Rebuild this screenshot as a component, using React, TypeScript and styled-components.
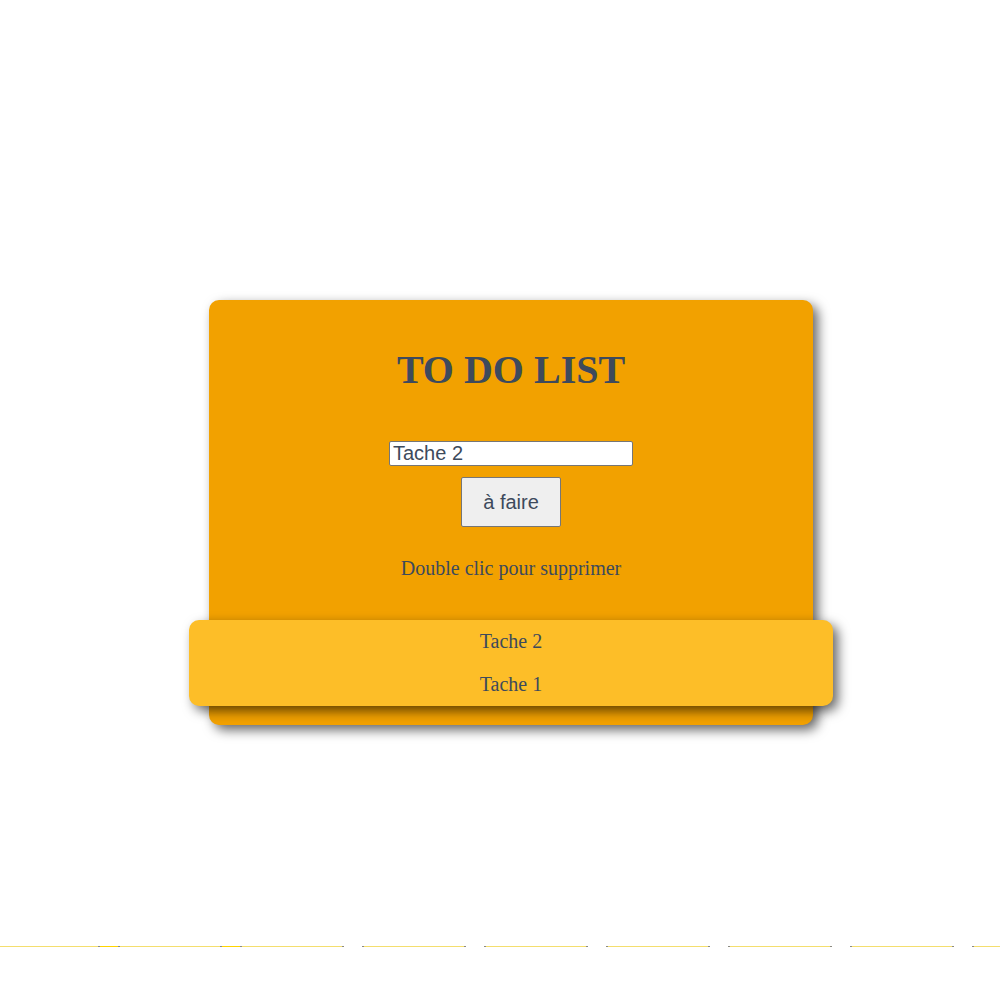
import React, { useState } from "react";
import styled, { createGlobalStyle } from "styled-components";

const GlobalStyle = createGlobalStyle`
  html, body {
    margin: 0;
    padding: 0;
    background: #ffffff;
  }
  body {
    font-family: "Liberation Serif", "Times New Roman", serif;
    color: #3d4a5c;
  }
`;

const Page = styled.main`
  display: flex;
  flex-direction: column;
  align-items: center;
  padding: 300px 0 0 22px;
  min-height: 1000px;
  box-sizing: border-box;
  overflow: hidden;
`;

const Card = styled.section`
  width: 604px;
  background-color: #f2a100;
  border-radius: 10px;
  box-shadow: 5px 5px 12px rgba(0, 0, 0, 0.6);
  display: flex;
  flex-direction: column;
  align-items: center;
  padding: 48px 0 19px 0;
  box-sizing: border-box;
`;

const Title = styled.h1`
  margin: 0;
  font-family: "Liberation Serif", "Times New Roman", serif;
  font-weight: bold;
  font-size: 40px;
  line-height: 44px;
  color: #3d4a5c;
`;

const TaskInput = styled.input`
  margin-top: 49px;
  width: 244px;
  height: 25px;
  box-sizing: border-box;
  border: 1px solid #767676;
  border-radius: 2px;
  padding: 0 3px;
  font-family: "Liberation Sans", Arial, sans-serif;
  font-size: 20px;
  color: #3d4a5c;
  background: #ffffff;
  outline: none;
`;

const AddButton = styled.button`
  margin-top: 11px;
  width: 100px;
  height: 50px;
  box-sizing: border-box;
  border: 1px solid #767676;
  border-radius: 2px;
  background-color: #efefef;
  font-family: "Liberation Sans", Arial, sans-serif;
  font-size: 20px;
  color: #3d4a5c;
  cursor: pointer;
`;

const Hint = styled.p`
  margin: 30px 0 0 0;
  font-size: 20px;
  line-height: 23px;
  color: #3d4a5c;
`;

const TaskList = styled.ul`
  list-style: none;
  align-self: stretch;
  margin: 40px -20px 0 -20px;
  padding: 0;
  background-color: #fdbe28;
  border-radius: 10px;
  box-shadow: 5px 5px 12px rgba(0, 0, 0, 0.6);
`;

const TaskItem = styled.li`
  height: 43px;
  display: flex;
  align-items: center;
  justify-content: center;
  font-size: 20px;
  color: #3d4a5c;
  cursor: pointer;
`;

const Ground = styled.div`
  align-self: stretch;
  margin: 221px 0 0 -26px;
  display: flex;
  height: 1px;
`;

const Segment = styled.div`
  flex: 0 0 104px;
  display: flex;
  height: 1px;
`;

const SegmentEnd = styled.span`
  flex: 0 0 2px;
  background-color: #8c8a80;
`;

const SegmentBody = styled.span`
  flex: 1;
  background-color: #f4de6e;
`;

const Gap = styled.div<{ $filled: boolean }>`
  flex: 0 0 18px;
  height: 1px;
  background-color: ${(p) => (p.$filled ? "#ffd400" : "transparent")};
`;

const App: React.FC = () => {
  const [value, setValue] = useState("Tache 2");
  const [tasks, setTasks] = useState<string[]>(["Tache 2", "Tache 1"]);

  const addTask = () => {
    if (value.trim()) setTasks([value, ...tasks]);
  };

  const removeTask = (index: number) => {
    setTasks(tasks.filter((_, i) => i !== index));
  };

  return (
    <React.Fragment>
      <GlobalStyle />
      <Page>
        <Card>
          <Title>TO DO LIST</Title>
          <TaskInput value={value} onChange={(e) => setValue(e.target.value)} />
          <AddButton onClick={addTask}>à faire</AddButton>
          <Hint>Double clic pour supprimer</Hint>
          <TaskList>
            {tasks.map((task, i) => (
              <TaskItem key={i} onDoubleClick={() => removeTask(i)}>
                {task}
              </TaskItem>
            ))}
          </TaskList>
        </Card>
        <Ground>
          {[...Array(9)].map((_, i) => (
            <React.Fragment key={i}>
              <Segment>
                <SegmentEnd />
                <SegmentBody />
                <SegmentEnd />
              </Segment>
              <Gap $filled={i < 2} />
            </React.Fragment>
          ))}
        </Ground>
      </Page>
    </React.Fragment>
  );
};

export default App;
